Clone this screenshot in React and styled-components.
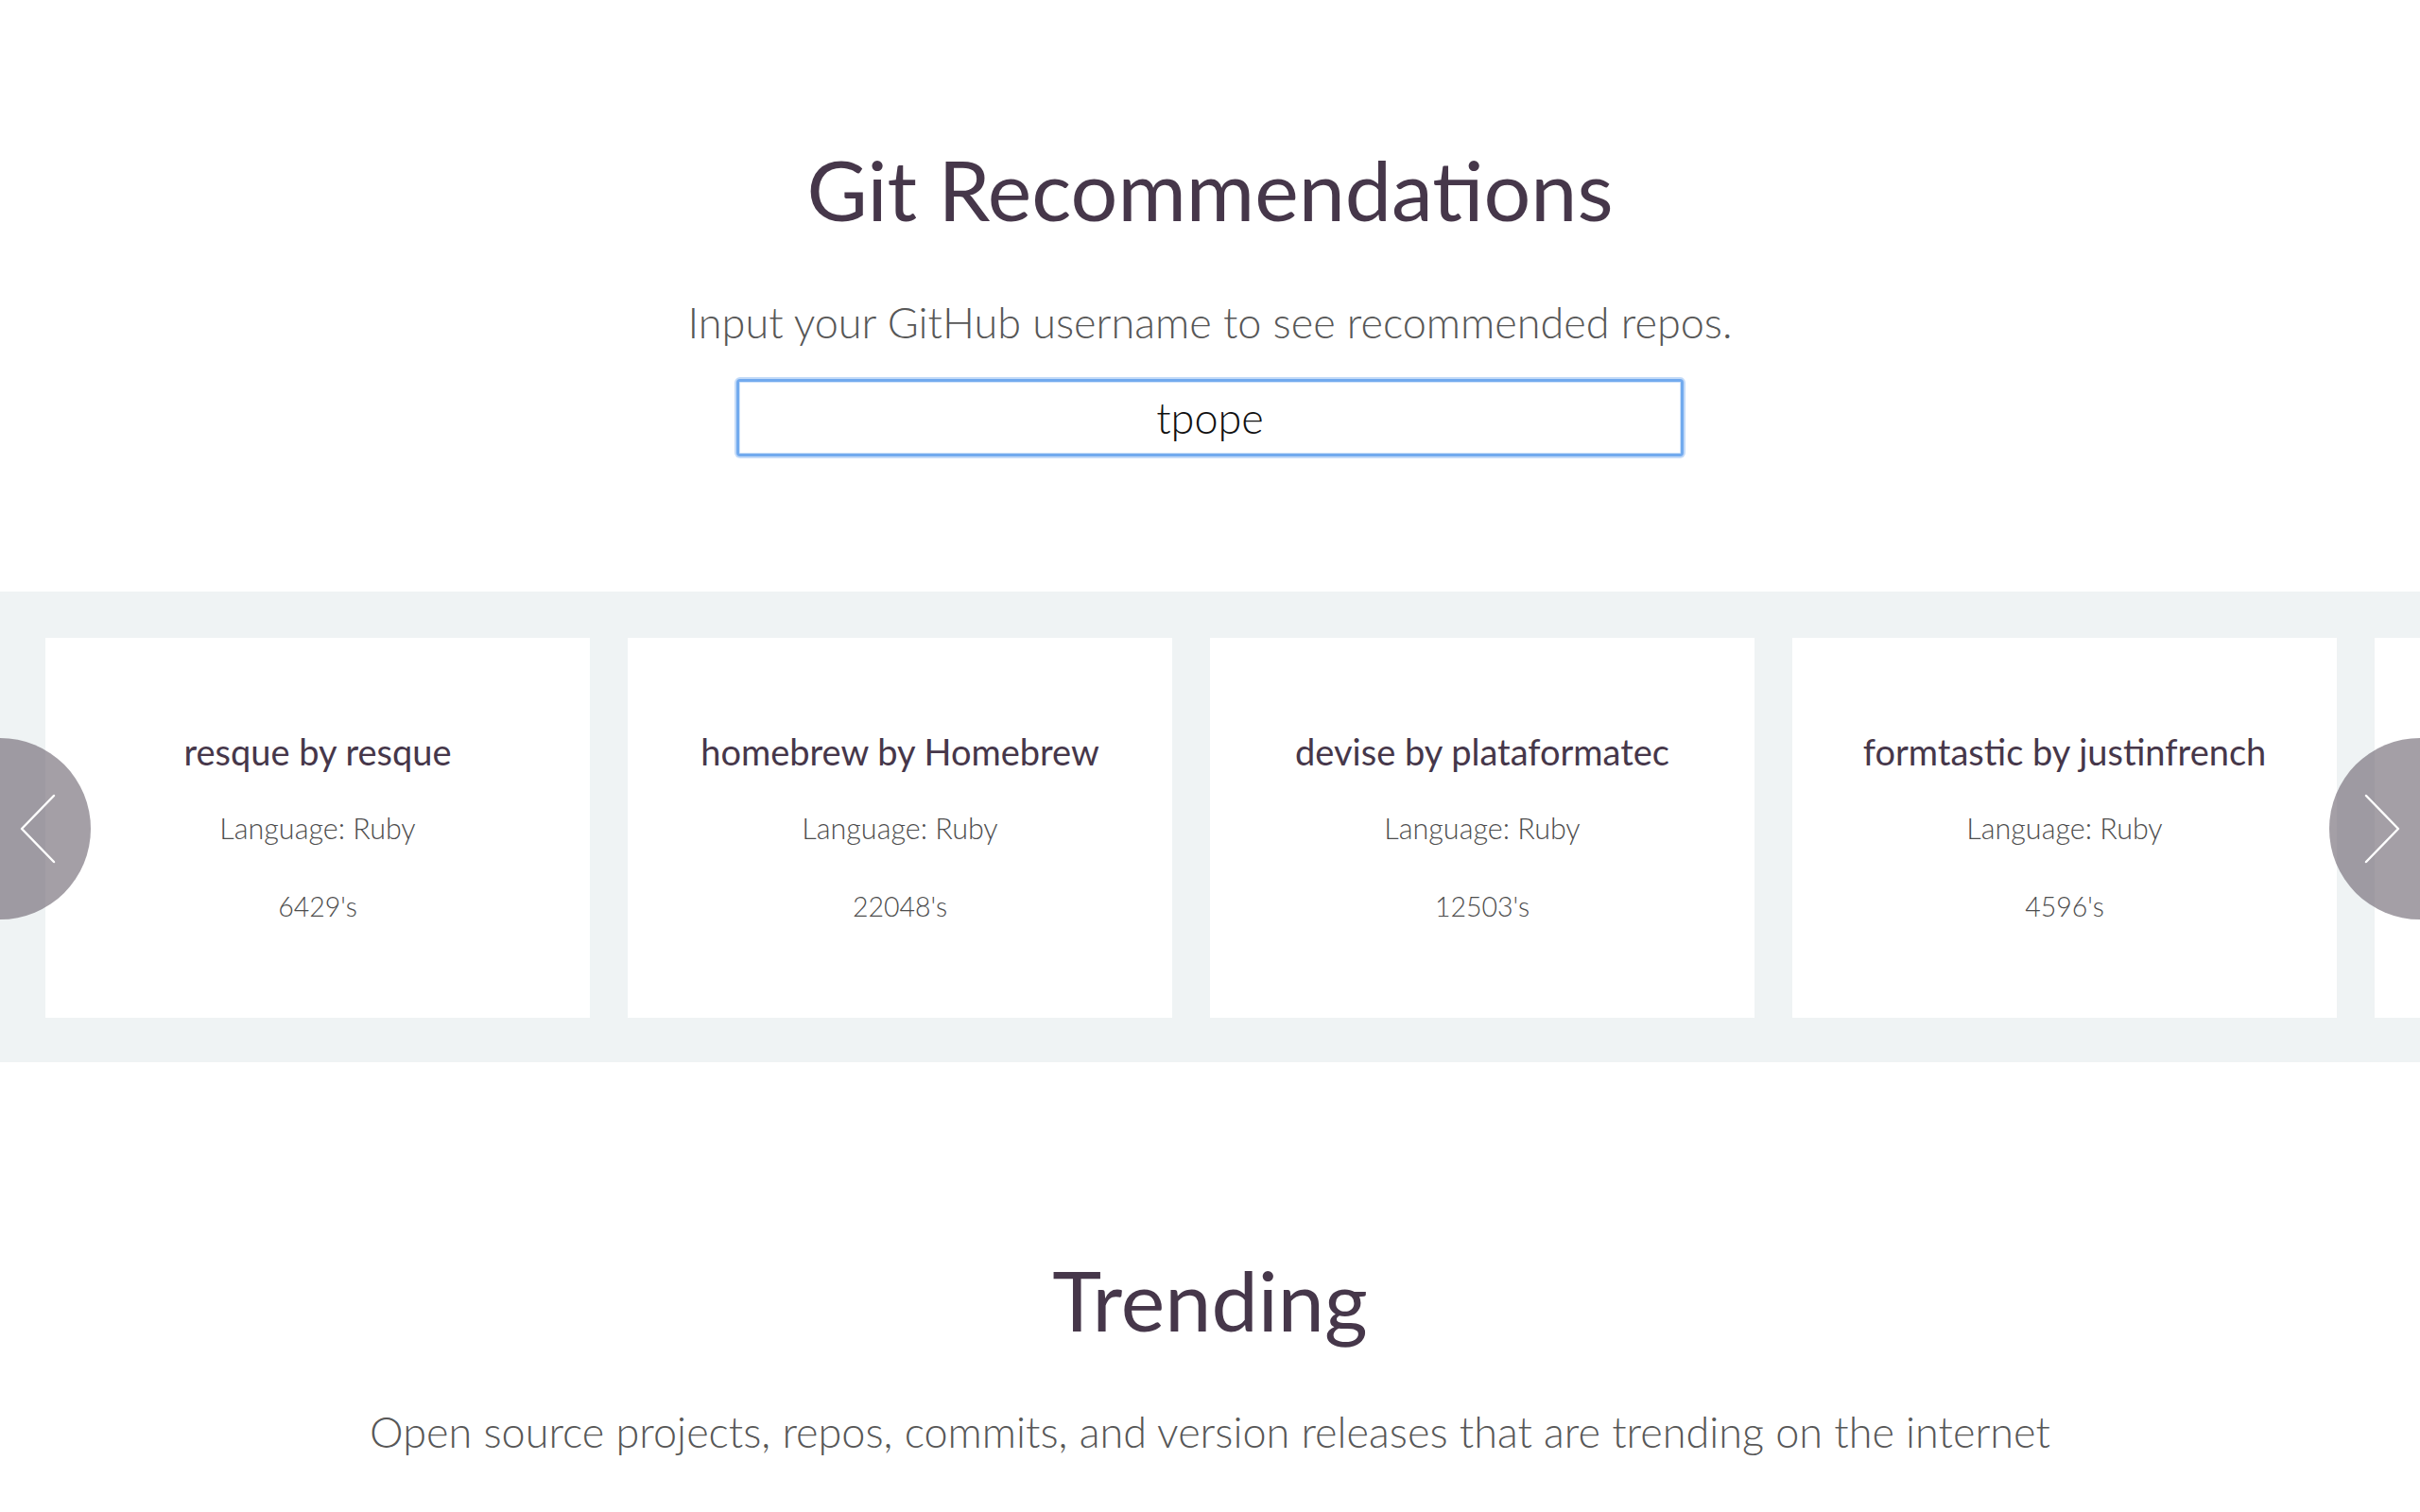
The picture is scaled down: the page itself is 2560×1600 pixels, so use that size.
import React from 'react'
import styled, { createGlobalStyle } from 'styled-components'

const repos = [
  { name: 'resque', owner: 'resque', language: 'Ruby', count: 6429 },
  { name: 'homebrew', owner: 'Homebrew', language: 'Ruby', count: 22048 },
  { name: 'devise', owner: 'plataformatec', language: 'Ruby', count: 12503 },
  { name: 'formtastic', owner: 'justinfrench', language: 'Ruby', count: 4596 },
]

const App = () => {
  return (
    <Page>
      <GlobalStyle />
      <Hero>
        <Title>Git Recommendations</Title>
        <Lead>Input your GitHub username to see recommended repos.</Lead>
        <UserInput defaultValue="tpope" autoFocus spellCheck={false} />
      </Hero>

      <Carousel>
        <Track>
          {repos.map(repo => (
            <Card key={repo.name}>
              <CardTitle>{repo.name} by {repo.owner}</CardTitle>
              <CardLine size={30.5} gap={40}>Language: {repo.language}</CardLine>
              <CardLine size={28.5} gap={47}>{repo.count}'s</CardLine>
            </Card>
          ))}
          {/* next slide, only its edge is in view */}
          <Card />
        </Track>
        <Arrow side="left">
          <svg width="192" height="192" viewBox="0 0 192 192">
            <polyline points="153,61 119,96 153,131" fill="none" stroke="#fff" strokeWidth="2.5" strokeLinecap="round" strokeLinejoin="round" />
          </svg>
        </Arrow>
        <Arrow side="right">
          <svg width="192" height="192" viewBox="0 0 192 192">
            <polyline points="39,61 73,96 39,131" fill="none" stroke="#fff" strokeWidth="2.5" strokeLinecap="round" strokeLinejoin="round" />
          </svg>
        </Arrow>
      </Carousel>

      <Trending>
        <Title>Trending</Title>
        <Lead>Open source projects, repos, commits, and version releases that are trending on the internet</Lead>
      </Trending>
    </Page>
  )
}

export default App

const GlobalStyle = createGlobalStyle`
    html, body {
        margin: 0;
        padding: 0;
        background: #fff;
    }
    body {
        font-family: Lato, "Open Sans", sans-serif;
    }
`

const Page = styled.div`
    width: 100%;
    overflow: hidden;
`

const Hero = styled.section`
    display: flex;
    flex-direction: column;
    align-items: center;
    padding-top: 148px;
`

const Title = styled.h1`
    margin: 0;
    font-family: Lato, sans-serif;
    font-weight: 400;
    font-size: 88px;
    line-height: 1.2;
    color: #46374a;
    text-align: center;
`

const Lead = styled.p`
    margin: 60px 0 0;
    font-family: Lato, sans-serif;
    font-weight: 300;
    font-size: 45px;
    line-height: 1.2;
    color: #575757;
    text-align: center;
`

const UserInput = styled.input`
    box-sizing: border-box;
    margin-top: 33px;
    width: 1002px;
    height: 82px;
    padding: 0 20px;
    border: 3px solid #72aaee;
    border-radius: 4px;
    box-shadow: 0 0 0 2px #c4dbf8, inset 0 0 0 1px #cfe2f9;
    outline: none;
    background: #fff;
    font-family: Lato, sans-serif;
    font-weight: 300;
    font-size: 45px;
    color: #111;
    caret-color: #000;
    text-align: center;
`

const Carousel = styled.section`
    position: relative;
    margin-top: 143px;
    background: #eff3f4;
    padding: 49px 0 47px;
    overflow: hidden;
`

const Track = styled.div`
    display: flex;
    gap: 40px;
    padding-left: 48px;
`

const Card = styled.div`
    flex: 0 0 576px;
    height: 402px;
    box-sizing: border-box;
    padding-top: 98px;
    background: #fff;
    display: flex;
    flex-direction: column;
    align-items: center;
    text-align: center;
`

const CardTitle = styled.h3`
    margin: 0;
    font-family: Lato, sans-serif;
    font-weight: 400;
    font-size: 38px;
    line-height: 1.2;
    color: #46374a;
    white-space: nowrap;
`

const CardLine = styled.p`
    margin: ${props => props.gap}px 0 0;
    font-family: Lato, sans-serif;
    font-weight: 300;
    font-size: ${props => props.size}px;
    line-height: 1.2;
    color: #4d4d4d;
`

const Arrow = styled.button`
    position: absolute;
    top: 155px;
    ${props => (props.side === 'left' ? 'left: -96px;' : 'right: -96px;')}
    width: 192px;
    height: 192px;
    padding: 0;
    border: none;
    border-radius: 50%;
    background: rgba(103, 95, 107, 0.6);
    cursor: pointer;
    svg {
        display: block;
    }
`

const Trending = styled.section`
    display: flex;
    flex-direction: column;
    align-items: center;
    padding-top: 199px;
    padding-bottom: 80px;
`
